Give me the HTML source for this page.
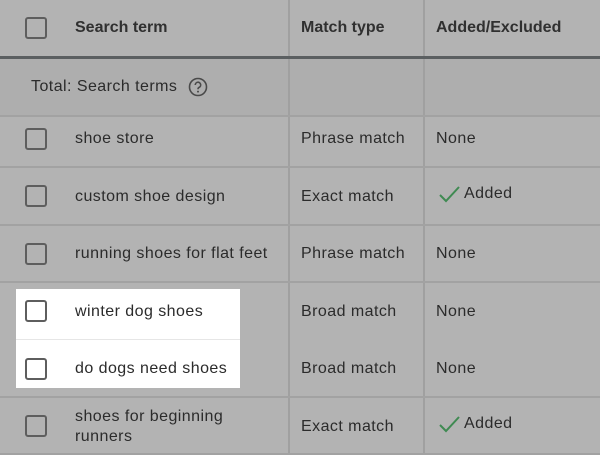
<!DOCTYPE html>
<html><head><style>
body{margin:0;width:600px;height:455px;background:#b3b3b3;position:relative;overflow:hidden;font-family:"Liberation Sans",sans-serif;color:#2b2b2b;font-size:16px;letter-spacing:0.45px}
.a{position:absolute}
.h{position:absolute;left:0;width:600px;height:2px;background:#a2a2a2}
.v{position:absolute;top:0;height:455px;width:2px;background:#a0a0a0}
.cb{position:absolute;left:25px;width:18px;height:18px;border:2px solid #5e5e5e;border-radius:3px}
.t{position:absolute;line-height:20px;white-space:nowrap}
.b{font-weight:bold;letter-spacing:0;color:#303030}
</style></head><body>
<div class="a" style="left:0;top:58px;width:600px;height:57px;background:#aeaeae"></div>
<div class="a" style="left:16px;top:289px;width:224px;height:99px;background:#fff"></div>
<div class="a" style="left:16px;top:339px;width:224px;height:1px;background:#e6e6e6"></div>
<div class="v" style="left:288px"></div>
<div class="v" style="left:423px"></div>
<div class="a" style="left:0;top:56px;width:600px;height:3px;background:#5b5f61"></div>
<div class="h" style="top:115px"></div>
<div class="h" style="top:166px"></div>
<div class="h" style="top:224px"></div>
<div class="h" style="top:281px"></div>
<div class="h" style="top:396px"></div>
<div class="h" style="top:453px"></div>

<div class="cb" style="top:17px"></div>
<div class="t b" style="left:75px;top:18px">Search term</div>
<div class="t b" style="left:301px;top:18px">Match type</div>
<div class="t b" style="left:436px;top:18px">Added/Excluded</div>

<div class="t" style="left:31px;top:77px">Total: Search terms</div>
<svg class="a" style="left:188px;top:77px" width="20" height="20" viewBox="0 0 20 20"><circle cx="10" cy="10" r="8.5" fill="none" stroke="#4a4a4a" stroke-width="1.6"/><path d="M7.3 8a2.7 2.7 0 1 1 3.8 2.4c-.8.4-1.1.9-1.1 1.8" fill="none" stroke="#4a4a4a" stroke-width="1.6"/><circle cx="10" cy="14.6" r="1" fill="#4a4a4a"/></svg>

<div class="cb" style="top:128px"></div>
<div class="t" style="left:75px;top:129px">shoe store</div>
<div class="t" style="left:301px;top:129px">Phrase match</div>
<div class="t" style="left:436px;top:129px">None</div>

<div class="cb" style="top:185px"></div>
<div class="t" style="left:75px;top:187px">custom shoe design</div>
<div class="t" style="left:301px;top:187px">Exact match</div>
<svg class="a" style="left:438px;top:184px" width="24" height="20"><path d="M2 11l6 6L21 3" fill="none" stroke="#3f8a52" stroke-width="2"/></svg>
<div class="t" style="left:464px;top:184px">Added</div>

<div class="cb" style="top:243px"></div>
<div class="t" style="left:75px;top:244px">running shoes for flat feet</div>
<div class="t" style="left:301px;top:244px">Phrase match</div>
<div class="t" style="left:436px;top:244px">None</div>

<div class="cb" style="top:300px"></div>
<div class="t" style="left:75px;top:302px">winter dog shoes</div>
<div class="t" style="left:301px;top:302px">Broad match</div>
<div class="t" style="left:436px;top:302px">None</div>

<div class="cb" style="top:358px"></div>
<div class="t" style="left:75px;top:359px">do dogs need shoes</div>
<div class="t" style="left:301px;top:359px">Broad match</div>
<div class="t" style="left:436px;top:359px">None</div>

<div class="cb" style="top:415px"></div>
<div class="t" style="left:75px;top:407px">shoes for beginning</div>
<div class="t" style="left:75px;top:427px">runners</div>
<div class="t" style="left:301px;top:417px">Exact match</div>
<svg class="a" style="left:438px;top:414px" width="24" height="20"><path d="M2 11l6 6L21 3" fill="none" stroke="#3f8a52" stroke-width="2"/></svg>
<div class="t" style="left:464px;top:414px">Added</div>
</body></html>
